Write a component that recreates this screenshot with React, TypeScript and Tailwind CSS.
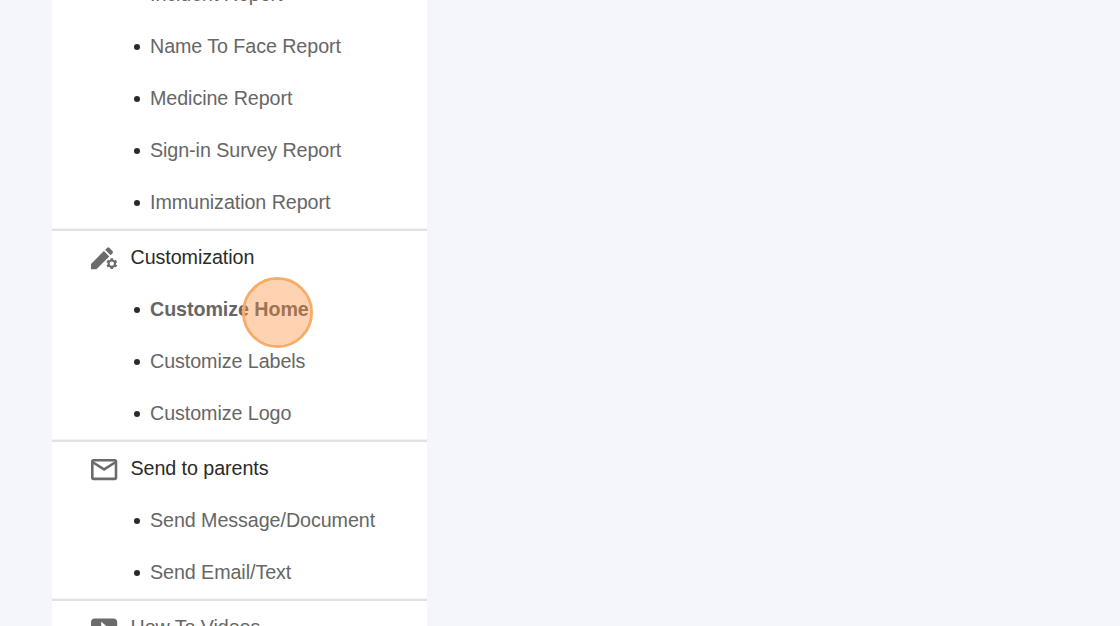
import type { ReactNode } from "react";

type Section = {
  title: string;
  icon?: ReactNode;
  muted?: boolean;
  items: { label: string; active?: boolean }[];
};

function PenGearIcon() {
  return (
    <svg viewBox="0 0 32 32" className="size-8" fill="#6b6b6b">
      <path d="M3 20.9v5.4h5.4L21.3 13.4 15.9 8z" />
      <path d="M17.2 6.8l1.9-1.9q1.2-1.1 2.4 0l3 3q1.1 1.2 0 2.4l-1.9 1.9z" />
      <g stroke="#6b6b6b" strokeWidth="2.6">
        <path d="M23.8 15.3v10.8M19.1 18l9.4 5.4M19.1 23.4l9.4-5.4" />
      </g>
      <circle
        cx="23.8"
        cy="20.7"
        r="3.2"
        fill="#fff"
        stroke="#6b6b6b"
        strokeWidth="2.1"
      />
    </svg>
  );
}

function MailIcon() {
  return (
    <svg viewBox="0 0 32 32" className="size-8" fill="none" stroke="#6b6b6b">
      <rect x="4.3" y="6.3" width="23.7" height="18.6" rx="1.3" strokeWidth="2.6" />
      <path d="M4.8 8.2L16.1 15.4l11.3-7.2" strokeWidth="2.5" />
    </svg>
  );
}

function VideoIcon() {
  return (
    <svg viewBox="0 0 32 32" className="size-8">
      <rect x="3" y="5.4" width="26.2" height="21" rx="4" fill="#6b6b6b" />
      <path d="M13.2 8.8v14.6l9-7.3z" fill="#fff" />
    </svg>
  );
}

const sections: Section[] = [
  {
    title: "Reports",
    items: [
      { label: "Incident Report" },
      { label: "Name To Face Report" },
      { label: "Medicine Report" },
      { label: "Sign-in Survey Report" },
      { label: "Immunization Report" },
    ],
  },
  {
    title: "Customization",
    icon: <PenGearIcon />,
    items: [
      { label: "Customize Home", active: true },
      { label: "Customize Labels" },
      { label: "Customize Logo" },
    ],
  },
  {
    title: "Send to parents",
    icon: <MailIcon />,
    items: [{ label: "Send Message/Document" }, { label: "Send Email/Text" }],
  },
  { title: "How To Videos", icon: <VideoIcon />, muted: true, items: [] },
];

function MenuItem({ label, active }: { label: string; active?: boolean }) {
  return (
    <li className="flex h-[52px] items-center pl-[81.5px]">
      <span className="mt-[2.5px] size-1.5 shrink-0 rounded-full bg-[#2a2a2a]" />
      <a
        href="#"
        className={
          active
            ? "relative ml-[10.5px] font-bold text-[#666]"
            : "ml-[10.5px] text-[#666]"
        }
      >
        {label}
        {active && (
          <span className="absolute top-[-17px] left-[92px] size-[71px] rounded-full border-[3px] border-[#f7ac6a] bg-[#ff8a33]/38 bg-clip-padding" />
        )}
      </a>
    </li>
  );
}

export default function App() {
  return (
    <div className="flex h-screen overflow-hidden bg-[#f4f6fb] pl-[52px] font-['Liberation_Sans',Arial,sans-serif] text-[19.7px] leading-[30px] tracking-[-0.07px] whitespace-nowrap">
      <nav className="-mt-8 h-[720px] w-[375px] shrink-0 bg-white">
        {sections.map((section) => (
          <section
            key={section.title}
            className="border-b-2 border-[#e2e2e2]"
          >
            {section.icon && (
              <div className="flex h-[52px] items-center pl-9">
                <span className="mt-1">{section.icon}</span>
                <h2
                  className={
                    section.muted
                      ? "ml-[10.5px] text-[#666]"
                      : "ml-[10.5px] text-[#2a2a2a]"
                  }
                >
                  {section.title}
                </h2>
              </div>
            )}
            <ul className="border-b border-[#f3f3f3]">
              {section.items.map((item) => (
                <MenuItem key={item.label} {...item} />
              ))}
            </ul>
          </section>
        ))}
      </nav>
    </div>
  );
}
